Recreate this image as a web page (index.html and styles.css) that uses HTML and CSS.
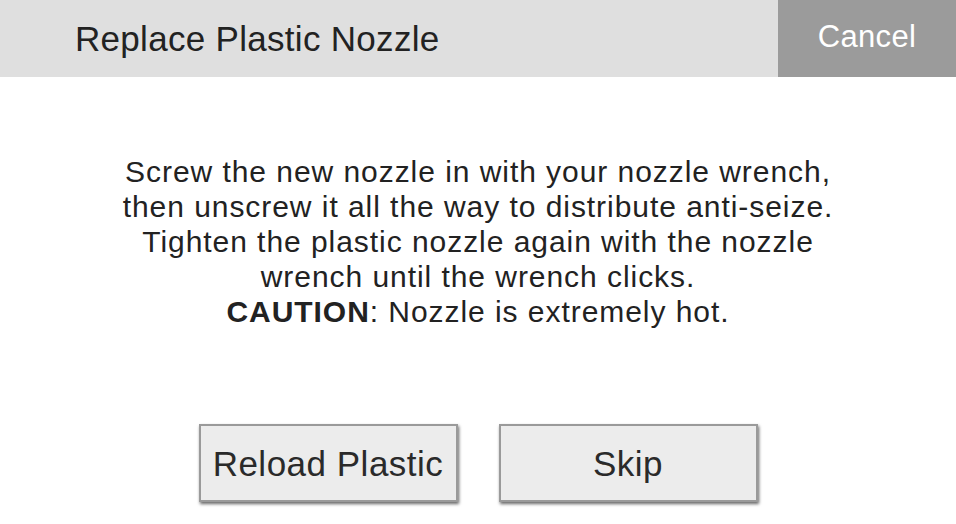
FILE: index.html
```html
<!DOCTYPE html>
<html>
<head>
<meta charset="utf-8">
<link rel="stylesheet" href="styles.css">
</head>
<body>
<div class="screen">
  <header class="header">
    <div class="title">Replace Plastic Nozzle</div>
    <div class="cancel">Cancel</div>
  </header>
  <main class="content">
    <p class="message">Screw the new nozzle in with your nozzle wrench,<br>then unscrew it all the way to distribute anti-seize.<br>Tighten the plastic nozzle again with the nozzle<br>wrench until the wrench clicks.<br><b>CAUTION</b>: Nozzle is extremely hot.</p>
    <div class="actions">
      <div class="btn">Reload Plastic</div>
      <div class="btn">Skip</div>
    </div>
  </main>
</div>
</body>
</html>
```
FILE: styles.css
```css
html, body {
  margin: 0;
  padding: 0;
  background: #ffffff;
}
.screen {
  width: 956px;
  height: 524px;
  font-family: "Liberation Sans", Arial, sans-serif;
  color: #222222;
  display: flex;
  flex-direction: column;
}
.header {
  height: 77px;
  display: flex;
  background: #dfdfdf;
}
.title {
  flex: 1;
  padding-left: 75px;
  font-size: 35px;
  letter-spacing: 0.3px;
  line-height: 77px;
  color: #222;
}
.cancel {
  width: 178px;
  background: #9b9b9b;
  color: #ffffff;
  font-size: 31px;
  letter-spacing: 0.3px;
  line-height: 74px;
  text-align: center;
}
.content {
  flex: 1;
  display: flex;
  flex-direction: column;
  align-items: center;
}
.message {
  margin: 77px 0 0 0;
  font-size: 30px;
  letter-spacing: 0.95px;
  line-height: 35px;
  text-align: center;
}
.message b {
  font-weight: bold;
}
.actions {
  margin-top: 95px;
  display: flex;
  gap: 41px;
}
.btn {
  width: 259px;
  height: 78px;
  box-sizing: border-box;
  background: #ececec;
  border: 2px solid #9a9a9a;
  box-shadow: 1px 2px 3px rgba(0,0,0,0.6);
  font-size: 35px;
  letter-spacing: 0.5px;
  line-height: 76px;
  text-align: center;
  color: #2a2a2a;
}
```
